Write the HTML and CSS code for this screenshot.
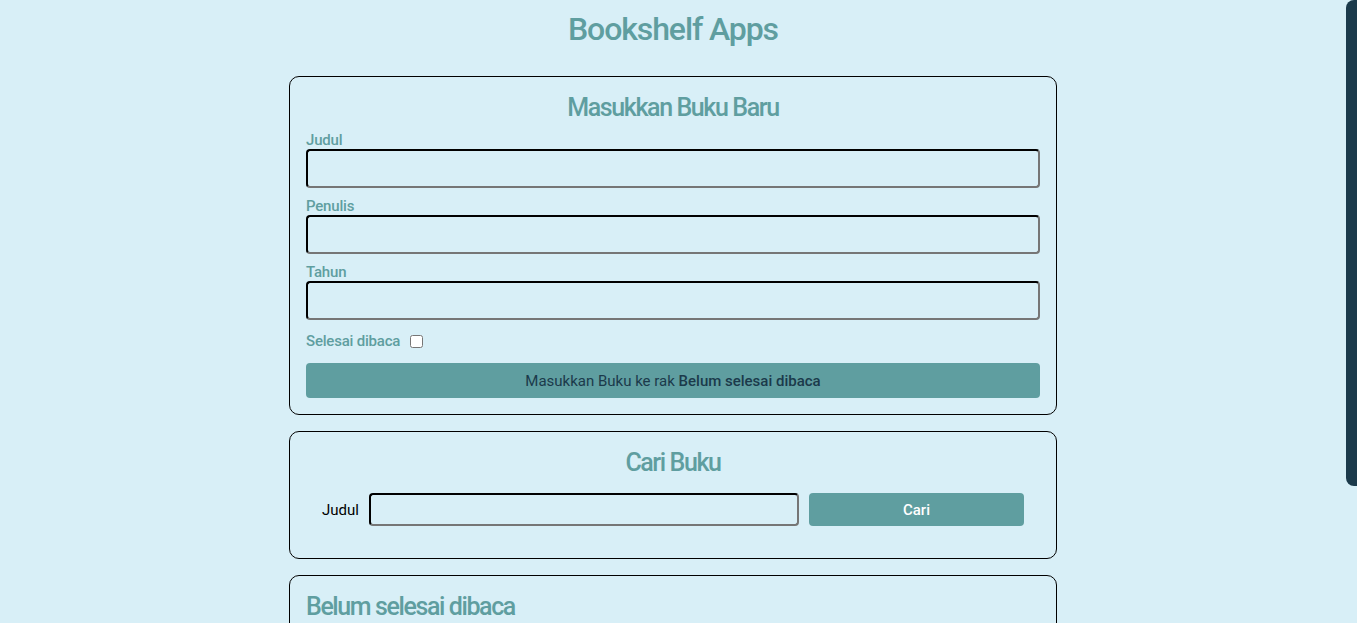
FILE: index.html
```html
<!DOCTYPE html>
<html lang="id">
<head>
<meta charset="utf-8">
<title>Bookshelf Apps</title>
<link rel="stylesheet" href="styles.css">
</head>
<body>
<div class="page">
  <header class="head">
    <h1 class="head-title">Bookshelf Apps</h1>
  </header>
  <main class="main">
    <section class="card">
      <h2 class="card-title">Masukkan Buku Baru</h2>
      <form class="book-form">
        <div class="field">
          <label class="field-label" for="title">Judul</label>
          <input class="field-input" id="title" type="text">
        </div>
        <div class="field">
          <label class="field-label" for="author">Penulis</label>
          <input class="field-input" id="author" type="text">
        </div>
        <div class="field">
          <label class="field-label" for="year">Tahun</label>
          <input class="field-input" id="year" type="number">
        </div>
        <div class="field-inline">
          <label class="field-label" for="complete">Selesai dibaca</label>
          <input class="check" id="complete" type="checkbox">
        </div>
        <button class="submit-btn" type="button">Masukkan Buku ke rak <span class="strong">Belum selesai dibaca</span></button>
      </form>
    </section>
    <section class="card">
      <h2 class="card-title">Cari Buku</h2>
      <form class="search-form">
        <label class="search-label" for="searchTitle">Judul</label>
        <input class="search-input" id="searchTitle" type="text">
        <button class="search-btn" type="button">Cari</button>
      </form>
    </section>
    <section class="card">
      <h2 class="card-title left">Belum selesai dibaca</h2>
      <div class="shelf"></div>
    </section>
    <section class="card">
      <h2 class="card-title left">Selesai dibaca</h2>
      <div class="shelf"></div>
    </section>
  </main>
</div>
<div class="scroll-thumb"></div>
</body>
</html>
```
FILE: styles.css
```css
html, body {
  margin: 0;
  padding: 0;
  height: 100%;
  overflow: hidden;
}
body {
  background: #d8eff7;
  font-family: Roboto, "Noto Sans", sans-serif;
  color: #5f9ea0;
}
.page {
  margin-right: 11px;
}
.head {
  text-align: center;
}
.head-title {
  margin: 0;
  padding-top: 10px;
  padding-bottom: 28px;
  font-size: 32px;
  font-weight: 500;
  letter-spacing: -1.1px;
  line-height: 38px;
  color: #5f9ea0;
}
.main {
  width: 768px;
  margin: 0 auto;
  display: flex;
  flex-direction: column;
  gap: 16px;
}
.card {
  border: 1px solid #000;
  border-radius: 10px;
  padding: 16px;
}
.card-title {
  margin: 0 0 8px;
  font-size: 25px;
  font-weight: 500;
  letter-spacing: -1.4px;
  line-height: 30px;
  text-align: center;
  color: #5f9ea0;
}
.card-title.left {
  text-align: left;
}
.book-form {
  display: flex;
  flex-direction: column;
}
.field {
  display: flex;
  flex-direction: column;
  margin-bottom: 9px;
}
.field-label {
  font-size: 15px;
  font-weight: 500;
  letter-spacing: -0.2px;
  line-height: 18px;
  color: #5f9ea0;
}
.field-input {
  box-sizing: border-box;
  height: 39px;
  border: 2px inset #767676;
  border-top-color: #1f1f1f;
  border-left-color: #1f1f1f;
  border-radius: 4px;
  background: transparent;
  font-family: inherit;
  font-size: 15px;
  padding: 4px 8px;
}
.field-inline {
  display: flex;
  align-items: center;
  gap: 6px;
  margin: 3px 0 13px;
}
.check {
  margin: 0 0 0 4px;
  width: 13px;
  height: 13px;
}
.submit-btn {
  height: 35px;
  border: 0;
  border-radius: 4px;
  background: #5f9ea0;
  color: #1b3a4b;
  font-family: inherit;
  font-size: 15px;
  cursor: pointer;
}
.strong {
  font-weight: 500;
}
.search-form {
  display: grid;
  grid-template-columns: auto minmax(0, 2fr) minmax(0, 1fr);
  align-items: center;
  column-gap: 10px;
  padding: 7px 16px 16px;
}
.search-label {
  font-size: 15px;
  color: #000;
}
.search-input {
  box-sizing: border-box;
  width: 100%;
  height: 33px;
  padding: 0 6px;
  border: 2px inset #767676;
  border-top-color: #1f1f1f;
  border-left-color: #1f1f1f;
  border-radius: 4px;
  background: transparent;
}
.search-btn {
  width: 100%;
  height: 33px;
  padding: 0;
  border: 0;
  border-radius: 4px;
  background: #5f9ea0;
  color: #fff;
  font-family: inherit;
  font-size: 15px;
  font-weight: 500;
}
.shelf {
  min-height: 80px;
}
.scroll-thumb {
  position: fixed;
  top: 0;
  right: 0;
  width: 11px;
  height: 486px;
  background: #1b3a4b;
  border-bottom-left-radius: 8px;
  border-top-left-radius: 8px;
}
```
